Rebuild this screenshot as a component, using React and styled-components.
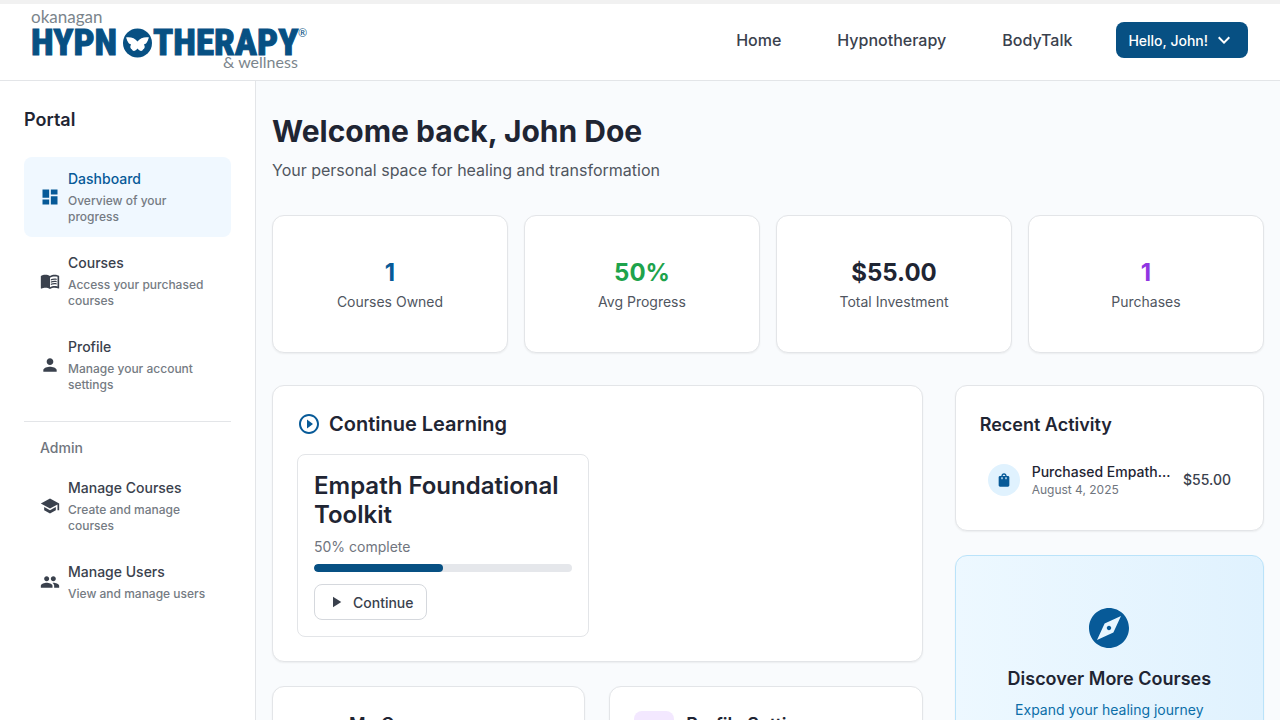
import styled, { createGlobalStyle, ThemeProvider } from 'styled-components';
import {
  MdDashboard,
  MdExplore,
  MdKeyboardArrowDown,
  MdMenuBook,
  MdPeople,
  MdPerson,
  MdPlayArrow,
  MdPlayCircleOutline,
  MdSchool,
  MdShoppingBag,
} from 'react-icons/md';

const theme = {
  primary: '#075083',
  primaryText: '#075a98',
  primarySoft: '#f0f8ff',
  text: '#1f2533',
  textSecondary: '#3a414d',
  textMuted: '#50565f',
  textSoft: '#70757e',
  border: '#e3e5e8',
  bg: '#ffffff',
  bgSecondary: '#f9fbfd',
};

const GlobalStyle = createGlobalStyle`
  * {
    box-sizing: border-box;
  }
  body {
    margin: 0;
    font-family: Inter, 'Liberation Sans', sans-serif;
    background-color: ${theme.bgSecondary};
    color: ${theme.text};
  }
  h1, h2, h3, p, ul {
    margin: 0;
    padding: 0;
  }
  a {
    color: inherit;
    text-decoration: none;
  }
  button {
    font-family: inherit;
    cursor: pointer;
  }
`;

const Page = styled.div`
  min-height: 100vh;
  display: flex;
  flex-direction: column;
  border-top: 4px solid #f1f1f1;
`;

const Header = styled.header`
  display: flex;
  align-items: center;
  justify-content: space-between;
  height: 77px;
  padding: 0 32px 4px;
  background-color: ${({ theme }) => theme.bg};
  border-bottom: 1px solid ${({ theme }) => theme.border};
`;
const LogoLink = styled.a`
  display: flex;
`;
const LogoArt = styled.svg`
  display: block;
  overflow: visible;
`;
const LogoWord = styled.text`
  font-family: 'Roboto Condensed', Lato, sans-serif;
  font-weight: 800;
  font-size: 37px;
  fill: ${({ theme }) => theme.primary};
  stroke: ${({ theme }) => theme.primary};
  stroke-width: 1px;
`;
const LogoSmall = styled.text`
  font-family: Lato, sans-serif;
  font-size: ${(props) => props.$size};
  fill: #7b858c;
`;
const LogoMark = styled.text`
  font-family: Lato, sans-serif;
  font-size: 11px;
  fill: ${({ theme }) => theme.primary};
`;
const HeaderRight = styled.div`
  display: flex;
  align-items: center;
  gap: 44px;
`;
const Nav = styled.nav`
  display: flex;
  gap: 56px;
`;
const NavLink = styled.a`
  font-size: 16px;
  line-height: 24px;
  font-weight: 500;
  color: ${({ theme }) => theme.textSecondary};
`;
const UserButton = styled.button`
  display: flex;
  align-items: center;
  gap: 4px;
  height: 36px;
  padding: 0 12px;
  border: 0;
  border-radius: 8px;
  font-size: 14px;
  font-weight: 500;
  color: #ffffff;
  background-color: ${({ theme }) => theme.primary};
`;

const Body = styled.div`
  flex: 1;
  display: flex;
`;

const Sidebar = styled.aside`
  flex: 0 0 256px;
  padding: 24px;
  background-color: ${({ theme }) => theme.bg};
  border-right: 1px solid ${({ theme }) => theme.border};
`;
const SidebarTitle = styled.h2`
  margin-bottom: 22px;
  font-size: 18px;
  line-height: 30px;
  font-weight: 600;
`;
const SidebarLabel = styled.h3`
  margin: 16px 0 8px;
  padding: 16px 16px 0;
  border-top: 1px solid ${({ theme }) => theme.border};
  font-size: 14px;
  line-height: 20px;
  font-weight: 500;
  color: ${({ theme }) => theme.textSoft};
`;
const Menu = styled.ul`
  display: flex;
  flex-direction: column;
  gap: 4px;
  list-style: none;
`;
const MenuLink = styled.a`
  display: flex;
  align-items: center;
  gap: 8px;
  padding: 12px 16px;
  border-radius: 8px;
  font-weight: 500;
  color: ${(props) =>
    props.$active ? props.theme.primaryText : props.theme.textSecondary};
  background-color: ${(props) =>
    props.$active ? props.theme.primarySoft : 'transparent'};
  svg {
    flex-shrink: 0;
  }
`;
const MenuTitle = styled.div`
  margin-bottom: 4px;
  font-size: 14px;
  line-height: 20px;
`;
const MenuText = styled.div`
  font-size: 12px;
  line-height: 16px;
  color: #757b83;
`;

const Main = styled.main`
  flex: 1;
  min-width: 0;
  padding: 32px 16px;
`;
const Title = styled.h1`
  margin-bottom: 8px;
  font-size: 30px;
  line-height: 36px;
  font-weight: 700;
`;
const Subtitle = styled.p`
  margin-bottom: 32px;
  font-size: 16px;
  line-height: 26px;
  color: ${({ theme }) => theme.textMuted};
`;

const Card = styled.section`
  padding: 24px;
  border: 1px solid ${({ theme }) => theme.border};
  border-radius: 12px;
  background-color: ${({ theme }) => theme.bg};
  box-shadow: 0 1px 2px rgba(0, 0, 0, 0.06);
`;
const Stats = styled.div`
  display: grid;
  grid-template-columns: repeat(4, 1fr);
  gap: 16px;
  margin-bottom: 32px;
`;
const StatCard = styled(Card)`
  padding: 40px 24px;
  text-align: center;
`;
const StatValue = styled.div`
  margin-bottom: 2px;
  font-size: 24px;
  line-height: 34px;
  font-weight: 700;
  color: ${(props) => props.$color};
`;
const StatLabel = styled.div`
  font-size: 14px;
  line-height: 20px;
  color: ${({ theme }) => theme.textMuted};
`;

const Columns = styled.div`
  display: grid;
  grid-template-columns: repeat(3, minmax(0, 1fr));
  gap: 32px;
`;
const Wide = styled.div`
  grid-column: span 2;
  display: flex;
  flex-direction: column;
  gap: 24px;
`;
const Side = styled.div`
  display: flex;
  flex-direction: column;
  gap: 24px;
`;
const CardTitle = styled.h2`
  display: flex;
  align-items: center;
  gap: 8px;
  margin-bottom: ${(props) => (props.$large ? '16px' : '14px')};
  font-size: ${(props) => (props.$large ? '20px' : '18px')};
  line-height: ${(props) => (props.$large ? '28px' : '30px')};
  font-weight: 600;
  svg {
    color: ${({ theme }) => theme.primaryText};
  }
`;

const CourseGrid = styled.div`
  display: grid;
  grid-template-columns: repeat(2, minmax(0, 1fr));
  gap: 16px;
`;
const Course = styled.article`
  padding: 16px;
  border: 1px solid ${({ theme }) => theme.border};
  border-radius: 8px;
`;
const CourseTitle = styled.h3`
  margin-bottom: 8px;
  font-size: 24px;
  line-height: 29px;
  font-weight: 600;
`;
const CourseStatus = styled.p`
  margin-bottom: 7px;
  font-size: 14px;
  line-height: 20px;
  color: ${({ theme }) => theme.textSoft};
`;
const Track = styled.div`
  height: 8px;
  margin-bottom: 12px;
  border-radius: 4px;
  overflow: hidden;
  background-color: #e5e7eb;
`;
const Bar = styled.div`
  height: 100%;
  border-radius: 4px;
  background-color: ${({ theme }) => theme.primary};
`;
const OutlineButton = styled.button`
  display: flex;
  align-items: center;
  gap: 8px;
  height: 36px;
  padding: 0 12px;
  border: 1px solid #d5d8dd;
  border-radius: 8px;
  font-size: 14px;
  font-weight: 500;
  color: ${({ theme }) => theme.textSecondary};
  background-color: ${({ theme }) => theme.bg};
`;

const LinkGrid = styled.div`
  display: grid;
  grid-template-columns: repeat(2, minmax(0, 1fr));
  gap: 24px;
`;
const LinkCard = styled(Card)`
  display: flex;
  gap: 12px;
`;
const IconBox = styled.div`
  flex: 0 0 40px;
  height: 40px;
  border-radius: 8px;
  background-color: ${(props) => props.$bg};
`;
const LinkTitle = styled.h3`
  font-size: 18px;
  line-height: 28px;
  font-weight: 600;
`;
const LinkText = styled.p`
  font-size: 14px;
  line-height: 20px;
  color: ${({ theme }) => theme.textMuted};
`;

const Activity = styled.div`
  display: flex;
  align-items: center;
  gap: 12px;
  padding: 8px;
`;
const ActivityIcon = styled.div`
  display: flex;
  align-items: center;
  justify-content: center;
  flex: 0 0 32px;
  height: 32px;
  border-radius: 50%;
  color: ${({ theme }) => theme.primaryText};
  background-color: #e0f2fe;
`;
const ActivityBody = styled.div`
  flex: 1;
  min-width: 0;
`;
const ActivityTitle = styled.div`
  overflow: hidden;
  white-space: nowrap;
  text-overflow: ellipsis;
  font-size: 14px;
  line-height: 20px;
  font-weight: 500;
`;
const ActivityDate = styled.div`
  font-size: 12px;
  line-height: 16px;
  color: ${({ theme }) => theme.textSoft};
`;
const Price = styled.div`
  font-size: 14px;
  line-height: 20px;
  font-weight: 500;
  color: ${({ theme }) => theme.textSecondary};
`;

const Discover = styled(Card)`
  display: flex;
  flex-direction: column;
  align-items: center;
  padding: 48px 24px;
  border-color: #bae3fa;
  background: linear-gradient(90deg, #edf8ff, #e0f2fe);
  text-align: center;
  svg {
    margin-bottom: 12px;
    color: ${({ theme }) => theme.primaryText};
  }
`;
const DiscoverTitle = styled.h2`
  margin-bottom: 6px;
  font-size: 18px;
  line-height: 30px;
  font-weight: 600;
`;
const DiscoverText = styled.p`
  font-size: 14px;
  line-height: 20px;
  color: #0b6ea8;
`;

const portalLinks = [
  {
    title: 'Dashboard',
    text: 'Overview of your progress',
    icon: MdDashboard,
    active: true,
  },
  { title: 'Courses', text: 'Access your purchased courses', icon: MdMenuBook },
  { title: 'Profile', text: 'Manage your account settings', icon: MdPerson },
];

const adminLinks = [
  { title: 'Manage Courses', text: 'Create and manage courses', icon: MdSchool },
  { title: 'Manage Users', text: 'View and manage users', icon: MdPeople },
];

const stats = [
  { value: '1', label: 'Courses Owned', color: '#075a98' },
  { value: '50%', label: 'Avg Progress', color: '#1ea34c' },
  { value: '$55.00', label: 'Total Investment', color: '#1f2533' },
  { value: '1', label: 'Purchases', color: '#9035e2' },
];

const Logo = () => (
  <LogoArt width="276" height="60" viewBox="0 0 276 60" role="img">
    <title>Okanagan Hypnotherapy and wellness</title>
    <LogoSmall x="-1" y="13" $size="17px">
      okanagan
    </LogoSmall>
    <LogoWord x="-1" y="45">
      HYPN
    </LogoWord>
    <circle cx="105.5" cy="33" r="14.5" fill="#075083" />
    <path
      d="M105.5 31.5C103 28 98 26.5 94 27.5C95 29.5 95 30.5 96 32C96.5 33.5 98 34 99 34.5C97.5 37 98.5 38.5 100 39.5C100.5 41.5 103.5 41.5 105.5 38.5C107.5 41.5 110.5 41.5 111 39.5C112.5 38.5 113.5 37 112 34.5C113 34 114.5 33.5 115 32C116 30.5 116 29.5 117 27.5C113 26.5 108 28 105.5 31.5Z"
      fill="#ffffff"
    />
    <LogoWord x="121" y="45">
      THERAPY
    </LogoWord>
    <LogoMark x="266" y="27">
      ®
    </LogoMark>
    <LogoSmall x="191" y="58" $size="16px">
      &amp; wellness
    </LogoSmall>
  </LogoArt>
);

const MenuList = ({ items }) => (
  <Menu>
    {items.map(({ title, text, icon: Icon, active }) => (
      <li key={title}>
        <MenuLink href="#" $active={active}>
          <Icon size={20} />
          <div>
            <MenuTitle>{title}</MenuTitle>
            <MenuText>{text}</MenuText>
          </div>
        </MenuLink>
      </li>
    ))}
  </Menu>
);

const App = () => {
  const progress = 50;

  return (
    <ThemeProvider theme={theme}>
      <GlobalStyle />
      <Page>
        <Header>
          <LogoLink href="#">
            <Logo />
          </LogoLink>
          <HeaderRight>
            <Nav>
              <NavLink href="#">Home</NavLink>
              <NavLink href="#">Hypnotherapy</NavLink>
              <NavLink href="#">BodyTalk</NavLink>
            </Nav>
            <UserButton>
              Hello, John!
              <MdKeyboardArrowDown size={24} />
            </UserButton>
          </HeaderRight>
        </Header>
        <Body>
          <Sidebar>
            <SidebarTitle>Portal</SidebarTitle>
            <MenuList items={portalLinks} />
            <SidebarLabel>Admin</SidebarLabel>
            <MenuList items={adminLinks} />
          </Sidebar>
          <Main>
            <Title>Welcome back, John Doe</Title>
            <Subtitle>
              Your personal space for healing and transformation
            </Subtitle>
            <Stats>
              {stats.map(({ value, label, color }) => (
                <StatCard key={label}>
                  <StatValue $color={color}>{value}</StatValue>
                  <StatLabel>{label}</StatLabel>
                </StatCard>
              ))}
            </Stats>
            <Columns>
              <Wide>
                <Card>
                  <CardTitle $large>
                    <MdPlayCircleOutline size={24} />
                    Continue Learning
                  </CardTitle>
                  <CourseGrid>
                    <Course>
                      <CourseTitle>Empath Foundational Toolkit</CourseTitle>
                      <CourseStatus>{progress}% complete</CourseStatus>
                      <Track>
                        <Bar style={{ width: `${progress}%` }} />
                      </Track>
                      <OutlineButton>
                        <MdPlayArrow size={18} />
                        Continue
                      </OutlineButton>
                    </Course>
                  </CourseGrid>
                </Card>
                <LinkGrid>
                  <LinkCard>
                    <IconBox $bg="transparent" />
                    <div>
                      <LinkTitle>My Courses</LinkTitle>
                      <LinkText>Access your purchased courses</LinkText>
                    </div>
                  </LinkCard>
                  <LinkCard>
                    <IconBox $bg="#f3e8ff" />
                    <div>
                      <LinkTitle>Profile Settings</LinkTitle>
                      <LinkText>Manage your account</LinkText>
                    </div>
                  </LinkCard>
                </LinkGrid>
              </Wide>
              <Side>
                <Card>
                  <CardTitle>Recent Activity</CardTitle>
                  <Activity>
                    <ActivityIcon>
                      <MdShoppingBag size={16} />
                    </ActivityIcon>
                    <ActivityBody>
                      <ActivityTitle>
                        Purchased Empath Foundational Toolkit
                      </ActivityTitle>
                      <ActivityDate>August 4, 2025</ActivityDate>
                    </ActivityBody>
                    <Price>$55.00</Price>
                  </Activity>
                </Card>
                <Discover>
                  <MdExplore size={48} />
                  <DiscoverTitle>Discover More Courses</DiscoverTitle>
                  <DiscoverText>Expand your healing journey</DiscoverText>
                </Discover>
              </Side>
            </Columns>
          </Main>
        </Body>
      </Page>
    </ThemeProvider>
  );
};

export default App;
